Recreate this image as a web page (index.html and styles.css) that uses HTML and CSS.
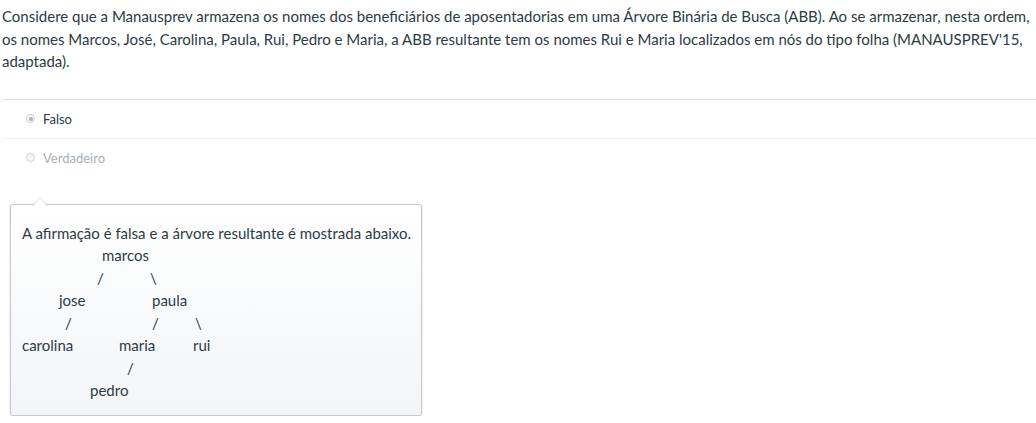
FILE: index.html
```html
<!DOCTYPE html>
<html lang="pt">
<head>
<meta charset="utf-8">
<link rel="stylesheet" href="styles.css">
</head>
<body>
<div class="question">
  <p class="prompt">Considere que a Manausprev armazena os nomes dos beneficiários de aposentadorias em uma Árvore Binária de Busca (ABB). Ao se armazenar, nesta ordem, os nomes Marcos, José, Carolina, Paula, Rui, Pedro e Maria, a ABB resultante tem os nomes Rui e Maria localizados em nós do tipo folha (MANAUSPREV'15, adaptada).</p>
  <div class="answers">
    <div class="answer selected"><span class="radio"></span><span class="label">Falso</span></div>
    <div class="answer"><span class="radio"></span><span class="label">Verdadeiro</span></div>
  </div>
  <div class="feedback">
    <p class="fb-text">A afirmação é falsa e a árvore resultante é mostrada abaixo.</p>
    <div class="tree">
      <div class="tline"><span class="n x80">marcos</span></div>
      <div class="tline"><span class="n x75">/</span><span class="n x128">\</span></div>
      <div class="tline"><span class="n x37">jose</span><span class="n x130">paula</span></div>
      <div class="tline"><span class="n x43">/</span><span class="n x130">/</span><span class="n x173">\</span></div>
      <div class="tline"><span class="n x0">carolina</span><span class="n x97">maria</span><span class="n x171">rui</span></div>
      <div class="tline"><span class="n x105">/</span></div>
      <div class="tline"><span class="n x68">pedro</span></div>
    </div>
  </div>
</div>
</body>
</html>
```

FILE: styles.css
```css
html, body {
  margin: 0;
  padding: 0;
  background: #fff;
}
body {
  font-family: Lato, "Open Sans", "Liberation Sans", sans-serif;
  color: #2d3b45;
  font-size: 15px;
}
.question {
  padding: 5px 0 0 2px;
}
.prompt {
  margin: 0 2px 0 0;
  line-height: 22.5px;
}
.answers {
  margin-top: 26px;
  border-top: 1px solid #dde0e2;
}
.answer {
  display: flex;
  align-items: center;
  height: 38px;
  padding-left: 24px;
  font-size: 13px;
  color: #a7b0b6;
}
.answer + .answer {
  border-top: 1px solid #eef0f1;
}
.answer.selected {
  color: #2d3b45;
}
.radio {
  width: 7px;
  height: 7px;
  border-radius: 50%;
  border: 1px solid #d0d4d7;
  background: #f4f5f6;
  margin-right: 8px;
  position: relative;
  flex: none;
}
.answer.selected .radio::after {
  content: "";
  position: absolute;
  left: 1.5px;
  top: 1.5px;
  width: 4px;
  height: 4px;
  border-radius: 50%;
  background: #a9afb4;
}
.feedback {
  position: relative;
  margin: 27px 0 0 8px;
  width: 412px;
  padding: 17px 4px 13px 11px;
  box-sizing: border-box;
  border: 1px solid #c3c9ce;
  border-radius: 3px;
  background: linear-gradient(#ffffff, #f3f5f7);
  box-shadow: 0 1px 2px rgba(0, 0, 0, 0.18);
}
.feedback::before {
  content: "";
  position: absolute;
  left: 22px;
  top: -8px;
  width: 0;
  height: 0;
  border-left: 7px solid transparent;
  border-right: 7px solid transparent;
  border-bottom: 7px solid #e2e5e7;
}
.feedback::after {
  content: "";
  position: absolute;
  left: 23px;
  top: -7px;
  width: 0;
  height: 0;
  border-left: 6px solid transparent;
  border-right: 6px solid transparent;
  border-bottom: 7px solid #fff;
}
.fb-text {
  margin: 0;
  line-height: 22.5px;
  white-space: nowrap;
}
.tline {
  position: relative;
  height: 22.5px;
  line-height: 22.5px;
}
.n {
  position: absolute;
  top: 0;
  white-space: nowrap;
}
.x0 { left: 0; }
.x37 { left: 37px; }
.x43 { left: 43px; }
.x68 { left: 68px; }
.x75 { left: 75px; }
.x80 { left: 80px; }
.x97 { left: 97px; }
.x105 { left: 105px; }
.x128 { left: 128px; }
.x130 { left: 130px; }
.x171 { left: 171px; }
.x173 { left: 173px; }
```
